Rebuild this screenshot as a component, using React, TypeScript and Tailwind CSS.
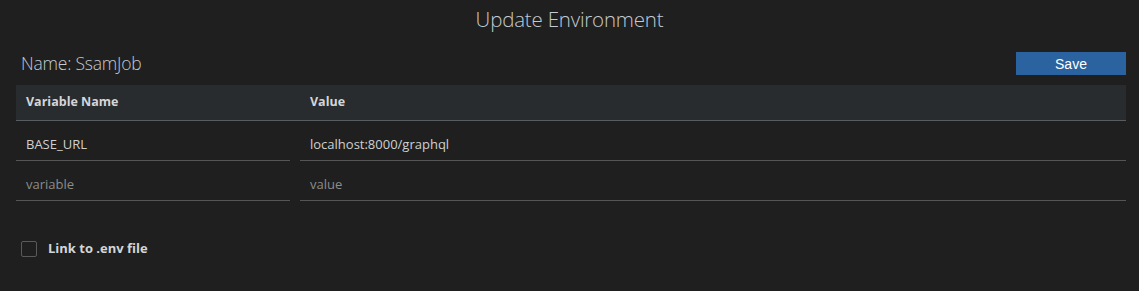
import React from "react";

export default function App() {
  const font = { fontFamily: '"Open Sans", "Noto Sans", sans-serif' };
  return (
    <div className="w-[1139px] h-[291px] bg-[#1f1f1f] overflow-hidden" style={font}>
      <div className="h-[38px] flex items-center justify-center">
        <h1 className="text-[20.5px] font-light text-[#c3cad2] leading-none tracking-[-0.2px]">
          Update Environment
        </h1>
      </div>
      <div className="pl-[16px] pr-[13px]">
        <div className="flex items-center justify-between mt-[14px] h-[23px]">
          <div className="pl-[5px] text-[17.5px] font-light text-[#c3cad2] tracking-[-0.2px] leading-none">
            Name: SsamJob
          </div>
          <button
            className="w-[110px] h-[23px] bg-[#2a63a0] text-white text-[14px] leading-none"
            style={{ fontFamily: '"Liberation Sans", Arial, sans-serif' }}
          >
            Save
          </button>
        </div>
        <div className="mt-[10px] h-[36px] bg-[#292c2e] border-b border-[#5a5d60] flex items-center text-[12.5px] font-bold text-[#d3d6d9]">
          <div className="w-[284px] pl-[10px]">Variable Name</div>
          <div className="pl-[10px]">Value</div>
        </div>
        <div className="flex gap-[10px] h-[40px]">
          <div className="w-[274px] border-b border-[#555555] flex items-center pl-[10px] pt-[9px] text-[13px] text-[#d0d0d0]">
            BASE_URL
          </div>
          <div className="flex-1 border-b border-[#555555] flex items-center pl-[10px] pt-[9px] text-[13px] text-[#d0d0d0]">
            localhost:8000/graphql
          </div>
        </div>
        <div className="flex gap-[10px] h-[40px]">
          <div className="w-[274px] border-b border-[#555555] flex items-center pl-[10px] pt-[9px] text-[13px] text-[#8c8c8c]">
            variable
          </div>
          <div className="flex-1 border-b border-[#555555] flex items-center pl-[10px] pt-[9px] text-[13px] text-[#8c8c8c]">
            value
          </div>
        </div>
        <label className="flex items-center mt-[38px] pl-[5px] gap-[11px]">
          <span className="w-[16px] h-[16px] rounded-[2px] border border-[#5a5a5a] bg-[#1f1f1f]" />
          <span className="text-[13px] font-bold text-[#d3d6d9]">Link to .env file</span>
        </label>
      </div>
    </div>
  );
}
